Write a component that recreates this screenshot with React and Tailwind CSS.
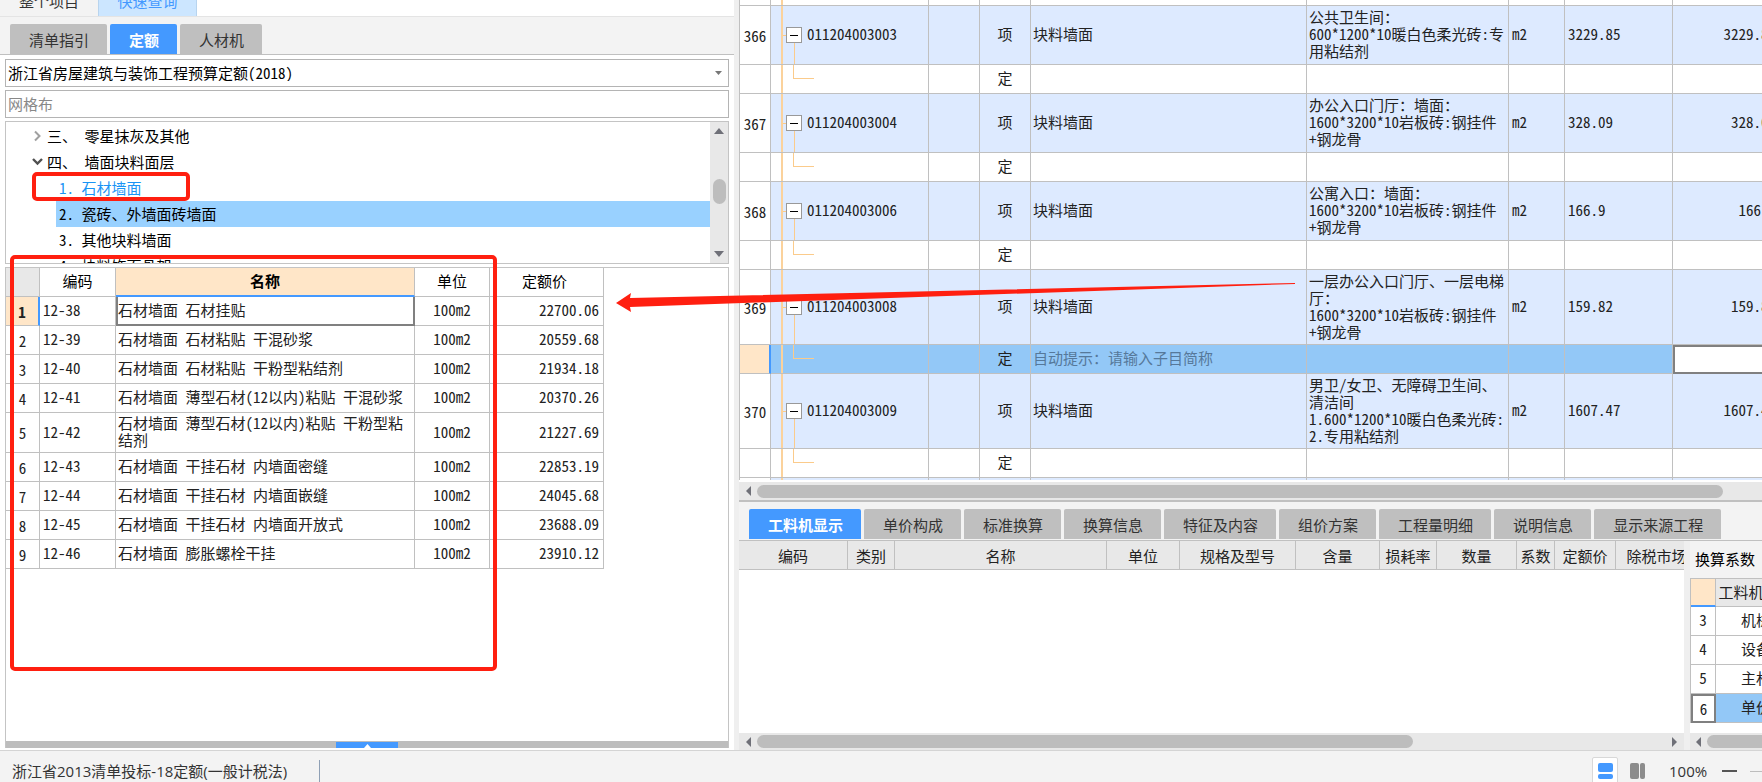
import React, { useState } from "react";

const quotaRows = [
  { code: "12-38", name: "石材墙面 石材挂贴", price: "22700.06" },
  { code: "12-39", name: "石材墙面 石材粘贴 干混砂浆", price: "20559.68" },
  { code: "12-40", name: "石材墙面 石材粘贴 干粉型粘结剂", price: "21934.18" },
  { code: "12-41", name: "石材墙面 薄型石材(12以内)粘贴 干混砂浆", price: "20370.26" },
  { code: "12-42", name: "石材墙面 薄型石材(12以内)粘贴 干粉型粘\n结剂", price: "21227.69", tall: true },
  { code: "12-43", name: "石材墙面 干挂石材 内墙面密缝", price: "22853.19" },
  { code: "12-44", name: "石材墙面 干挂石材 内墙面嵌缝", price: "24045.68" },
  { code: "12-45", name: "石材墙面 干挂石材 内墙面开放式", price: "23688.09" },
  { code: "12-46", name: "石材墙面 膨胀螺栓干挂", price: "23910.12" },
];

const billItems = [
  { no: 366, code: "011204003003", qty: "3229.85", height: "h-[58px]", desc: "公共卫生间：\n600*1200*10暖白色柔光砖:专\n用粘结剂" },
  { no: 367, code: "011204003004", qty: "328.09", height: "h-[58px]", desc: "办公入口门厅：墙面：\n1600*3200*10岩板砖:钢挂件\n+钢龙骨" },
  { no: 368, code: "011204003006", qty: "166.9", height: "h-[58px]", desc: "公寓入口：墙面：\n1600*3200*10岩板砖:钢挂件\n+钢龙骨" },
  { no: 369, code: "011204003008", qty: "159.82", height: "h-[74px]", active: true, desc: "一层办公入口门厅、一层电梯\n厅：\n1600*3200*10岩板砖:钢挂件\n+钢龙骨" },
  { no: 370, code: "011204003009", qty: "1607.47", height: "h-[74px]", desc: "男卫/女卫、无障碍卫生间、\n清洁间\n1.600*1200*10暖白色柔光砖:\n2.专用粘结剂" },
];

const detailTabs = ["工料机显示", "单价构成", "标准换算", "换算信息", "特征及内容", "组价方案", "工程量明细", "说明信息", "显示来源工程"];

const detailColumns = [
  { title: "编码", width: "w-[109px]" },
  { title: "类别", width: "w-[47px]" },
  { title: "名称", width: "w-[212px]" },
  { title: "单位", width: "w-[73px]" },
  { title: "规格及型号", width: "w-[116px]" },
  { title: "含量", width: "w-[84px]" },
  { title: "损耗率", width: "w-[57px]" },
  { title: "数量", width: "w-[80px]" },
  { title: "系数", width: "w-[38px]" },
  { title: "定额价", width: "w-[61px]" },
  { title: "除税市场价", width: "w-[97px]" },
];

const factors = [
  { no: 3, name: "机械" },
  { no: 4, name: "设备" },
  { no: 5, name: "主材" },
  { no: 6, name: "单价", active: true },
];

const frame = "border-r border-b border-[#c0c0c0] p-0";
const cell = `${frame} pb-[3px]`;

function Arrow({ dir }) {
  const points = {
    up: "0,8 10,8 5,2",
    down: "0,2 10,2 5,8",
    left: "8,0 8,10 3,5",
    right: "2,0 2,10 7,5",
  };
  return (
    <svg width="10" height="10" viewBox="0 0 10 10" className="shrink-0">
      <polygon points={points[dir]} fill="#6f7078" />
    </svg>
  );
}

function Tabs({ items, active, onSelect }) {
  return (
    <div className="flex items-end gap-[3px] bg-[#f3f3f3] pl-[10px] h-full">
      {items.map((item) => (
        <button
          key={item}
          onClick={() => onSelect(item)}
          className={
            item === active
              ? "h-[30px] shrink-0 rounded-t-[2px] bg-[#4499ff] pl-[19px] pr-[18px] font-bold text-white"
              : "h-[30px] shrink-0 rounded-t-[2px] bg-[#bfbfbf] pl-[19px] pr-[18px] text-[#333]"
          }
        >
          {item}
        </button>
      ))}
    </div>
  );
}

function QuotaTree() {
  return (
    <div className="flex h-[143px] shrink-0 overflow-hidden border border-[#c4c4c4] bg-white">
      <ul className="flex-1 pt-px leading-[26px] text-black">
        <li className="flex items-center pl-[26px]">
          <svg width="11" height="12" viewBox="0 0 11 12" fill="none" stroke="#a0a0a0" strokeWidth="2">
            <path d="M3 1.5L7.5 6L3 10.5" />
          </svg>
          <span className="ml-1">三、 零星抹灰及其他</span>
        </li>
        <li className="flex items-center pl-[26px]">
          <svg width="11" height="12" viewBox="0 0 11 12" fill="none" stroke="#505050" strokeWidth="2.4">
            <path d="M1 3L5.5 7.5L10 3" />
          </svg>
          <span className="ml-1">四、 墙面块料面层</span>
        </li>
        <li className="ml-[50px] pl-[3px] text-[#1a94f5]">1. 石材墙面</li>
        <li className="ml-[50px] bg-[#99d1ff] pl-[3px]">2. 瓷砖、外墙面砖墙面</li>
        <li className="ml-[50px] pl-[3px]">3. 其他块料墙面</li>
        <li className="ml-[50px] pl-[3px]">4. 块料饰面骨架</li>
      </ul>
      <div className="flex w-[18px] flex-col items-center bg-[#e8e8e8] py-1">
        <Arrow dir="up" />
        <div className="mt-[43px] h-[25px] w-[13px] rounded-full bg-[#bdbdbd]" />
        <div className="mt-auto">
          <Arrow dir="down" />
        </div>
      </div>
    </div>
  );
}

function QuotaTable() {
  return (
    <table className="w-[598px] table-fixed border-separate border-spacing-0 text-[#222]">
      <colgroup>
        <col className="w-[34px]" />
        <col className="w-[76px]" />
        <col className="w-[299px]" />
        <col className="w-[75px]" />
        <col className="w-[114px]" />
      </colgroup>
      <thead>
        <tr className="h-[29px] text-black">
          <th className={`${cell} bg-[#e8e8e8]`}></th>
          <th className={`${cell} font-normal`}>编码</th>
          <th className="border-r border-b-2 border-r-[#c0c0c0] border-b-[#4499ff] bg-[#ffe6c8] p-0 pb-[2px] font-bold">名称</th>
          <th className={`${cell} font-normal`}>单位</th>
          <th className={`${cell} pr-1 font-normal`}>定额价</th>
        </tr>
      </thead>
      <tbody>
        {quotaRows.map((row, i) => (
          <tr key={row.code} className={row.tall ? "h-[40px]" : "h-[29px]"}>
            <td
              className={
                i === 0
                  ? "border-r-2 border-b border-r-[#4499ff] border-b-[#c0c0c0] bg-[#ffe6c8] p-0 text-center font-bold"
                  : `${frame} text-center`
              }
            >
              {i + 1}
            </td>
            <td className={`${cell} pl-[3px]`}>{row.code}</td>
            <td
              className={
                i === 0
                  ? "border-r-2 border-b-2 border-l-2 border-[#808080] p-0 pb-[2px]"
                  : `${cell} pl-[2px] whitespace-pre`
              }
            >
              {row.name}
            </td>
            <td className={`${cell} text-center`}>100m2</td>
            <td className={`${cell} pr-1 text-right`}>{row.price}</td>
          </tr>
        ))}
      </tbody>
    </table>
  );
}

function BillRows({ item }) {
  const blue = `${cell} bg-[#ddeaff]`;
  const child = item.active ? `${cell} bg-[#93c8f7]` : cell;
  return (
    <>
      <tr>
        <td className={`${frame} text-center`}>{item.no}</td>
        <td className={`${frame} bg-[#ddeaff]`}>
          <div className={`flex items-center ${item.height}`}>
            <span className="h-full w-[12px] border-r-2 border-[#fbd29c]" />
            <span className="h-px w-[3px] bg-[#fbcb8b]" />
            <span className="flex h-full w-4 flex-col items-center">
              <span className="flex-1" />
              <button aria-label="折叠" className="flex size-4 items-center justify-center border border-[#999] bg-white">
                <span className="h-px w-2 bg-black" />
              </button>
              <span className="w-px flex-1 bg-[#fbcb8b]" />
            </span>
            <span className="ml-[5px] pb-[3px]">{item.code}</span>
          </div>
        </td>
        <td className={blue}></td>
        <td className={`${blue} text-center`}>项</td>
        <td className={`${blue} pl-[2px]`}>块料墙面</td>
        <td className={`${blue} pl-[2px] whitespace-pre`}>{item.desc}</td>
        <td className={`${blue} pl-[3px]`}>m2</td>
        <td className={`${blue} pl-[3px]`}>{item.qty}</td>
        <td className={`${blue} pr-[4px] text-right`}>{item.qty}</td>
      </tr>
      <tr>
        <td
          className={
            item.active
              ? "border-r-2 border-b border-r-[#4499ff] border-b-[#c0c0c0] bg-[#ffe6c8] p-0"
              : cell
          }
        ></td>
        <td className={item.active ? `${frame} bg-[#93c8f7]` : frame}>
          <div className="flex h-[28px]">
            <span className="w-[12px] border-r-2 border-[#fbd29c]" />
            <span className="ml-[10px] h-[14px] w-[21px] border-b border-l border-[#fbcb8b]" />
          </div>
        </td>
        <td className={child}></td>
        <td className={`${child} text-center`}>定</td>
        <td className={`${child} pl-[2px] text-[#56789a]`}>{item.active ? "自动提示：请输入子目简称" : ""}</td>
        <td className={child}></td>
        <td className={child}></td>
        <td className={child}></td>
        <td className={item.active ? "border-2 border-[#808080] bg-white p-0" : child}></td>
      </tr>
    </>
  );
}

function BillTable() {
  return (
    <table className="w-[1041px] table-fixed border-separate border-spacing-0 leading-[17px] text-[#222]">
      <colgroup>
        <col className="w-[31px]" />
        <col className="w-[158px]" />
        <col className="w-[51px]" />
        <col className="w-[51px]" />
        <col className="w-[276px]" />
        <col className="w-[202px]" />
        <col className="w-[56px]" />
        <col className="w-[108px]" />
        <col className="w-[108px]" />
      </colgroup>
      <tbody>
        <tr>
          <td className={frame}></td>
          <td className={frame}>
            <div className="h-[5px] w-[12px] border-r-2 border-[#fbd29c]" />
          </td>
          {[1, 2, 3, 4, 5, 6, 7].map((n) => (
            <td key={n} className={frame}></td>
          ))}
        </tr>
        {billItems.map((item) => (
          <BillRows key={item.no} item={item} />
        ))}
        <tr>
          <td className={frame}></td>
          <td className={`${frame} bg-[#ddeaff]`}>
            <div className="h-[28px] w-[12px] border-r-2 border-[#fbd29c]" />
          </td>
          {[1, 2, 3, 4, 5, 6, 7].map((n) => (
            <td key={n} className={`${frame} bg-[#ddeaff]`}></td>
          ))}
        </tr>
      </tbody>
    </table>
  );
}

function DetailPanel() {
  const [tab, setTab] = useState("工料机显示");
  return (
    <section className="flex h-[248px] shrink-0 flex-col">
      <div className="h-[39px] shrink-0 overflow-hidden border-b border-[#c0c0c0] bg-[#f3f3f3] pb-px font-['Noto_Sans_CJK_SC',sans-serif]">
        <Tabs items={detailTabs} active={tab} onSelect={setTab} />
      </div>
      <div className="flex min-h-0 flex-1">
        <div className="flex min-w-0 flex-1 flex-col overflow-hidden bg-white">
          <table className="w-[974px] table-fixed border-separate border-spacing-0 text-[#222]">
            <thead>
              <tr className="h-[29px]">
                {detailColumns.map((col) => (
                  <th key={col.title} className={`${frame} bg-[#e8e8e8] font-normal ${col.width}`}>
                    {col.title}
                  </th>
                ))}
              </tr>
            </thead>
          </table>
          <div className="mt-auto flex h-[17px] items-center bg-[#e8e8e8] pr-1 pl-[4px]">
            <Arrow dir="left" />
            <div className="ml-[4px] h-[13px] w-[70%] rounded-full bg-[#bdbdbd]" />
            <div className="ml-auto">
              <Arrow dir="right" />
            </div>
          </div>
        </div>
        <div className="w-[6px] shrink-0 bg-[#efefef]" />
        <div className="flex w-[72px] shrink-0 flex-col overflow-hidden bg-white">
          <h2 className="h-[37px] shrink-0 bg-[#f3f3f3] pl-[5px] leading-[36px] text-black">换算系数</h2>
          <table className="w-[107px] table-fixed border-separate border-spacing-0 border-t border-l border-[#c0c0c0] text-[#222]">
            <thead>
              <tr className="h-[28px]">
                <th className="w-[25px] border-r border-b-2 border-r-[#c0c0c0] border-b-[#4499ff] bg-[#ffe6c8] p-0"></th>
                <th className={`${cell} bg-[#e8e8e8] font-normal whitespace-nowrap`}>工料机类别</th>
              </tr>
            </thead>
            <tbody>
              {factors.map((f) => (
                <tr key={f.no} className="h-[29px]">
                  <td className={f.active ? "border-2 border-[#808080] p-0 text-center" : `${cell} text-center`}>{f.no}</td>
                  <td className={f.active ? `${cell} bg-[#93c8f7] text-center` : `${cell} text-center`}>{f.name}</td>
                </tr>
              ))}
            </tbody>
          </table>
          <div className="mt-auto flex h-[17px] items-center bg-[#e8e8e8] pl-[3px]">
            <Arrow dir="left" />
            <div className="ml-[4px] h-[13px] flex-1 rounded-l-full bg-[#bdbdbd]" />
          </div>
        </div>
      </div>
    </section>
  );
}

function StatusBar() {
  return (
    <footer className="flex h-8 shrink-0 items-center overflow-hidden border-t border-[#d4d4d4] bg-[#f3f3f3] pt-[9px] pl-3 font-['Open_Sans','Noto_Sans_CJK_SC',sans-serif] text-[#333]">
      <span>浙江省2013清单投标-18定额(一般计税法)</span>
      <span className="ml-8 h-[22px] w-px bg-[#8fa0b5]" />
      <button aria-label="上下布局" className="ml-auto flex h-[28px] w-[26px] items-center justify-center rounded-[2px] border border-[#d8d8d8] bg-white">
        <svg width="15" height="16" viewBox="0 0 15 16" fill="#4499ff">
          <rect width="15" height="9" rx="2" />
          <rect y="11" width="15" height="5" rx="2" />
        </svg>
      </button>
      <button aria-label="左右布局" className="ml-3">
        <svg width="15" height="16" viewBox="0 0 15 16" fill="#8c8c8c">
          <rect width="9" height="16" rx="2" />
          <rect x="10" width="5" height="16" rx="2" />
        </svg>
      </button>
      <span className="ml-6 w-[40px]">100%</span>
      <button aria-label="缩小" className="ml-[13px] h-[2px] w-[15px] bg-[#555]" />
      <span className="ml-[13px] flex w-3 overflow-hidden">
        <input
          type="range"
          aria-label="缩放比例"
          defaultValue="50"
          className="h-px w-[120px] shrink-0 appearance-none bg-[#bdbdbd]"
        />
      </span>
    </footer>
  );
}

// 红色批注：两个方框和一支箭头
function Annotations() {
  return (
    <div className="pointer-events-none absolute inset-0 overflow-hidden">
      <div className="absolute top-[172px] left-[32px] h-[29px] w-[158px] rounded-[5px] border-4 border-[#ff1f10]" />
      <div className="absolute top-[255px] left-[10px] h-[416px] w-[487px] rounded-[5px] border-4 border-[#ff1f10]" />
      <svg className="absolute top-[283px] left-[616px]" width="680" height="30" viewBox="0 0 680 30" fill="#ff1f10">
        <polygon points="0,20 15,10 14,15 679,0 679,1 14,24 15,29" />
      </svg>
    </div>
  );
}

export default function App() {
  const [tab, setTab] = useState("定额");
  return (
    <div className="relative flex h-screen flex-col overflow-hidden bg-white font-['Noto_Sans_Mono_CJK_SC','Noto_Sans_CJK_SC',sans-serif] text-[15px] leading-[17px]">
      <main className="flex min-h-0 flex-1">
        <aside className="flex w-[734px] shrink-0 flex-col">
          <div className="flex h-[17px] shrink-0 items-end overflow-hidden border-b border-[#e4e4e4] font-['Noto_Sans_CJK_SC',sans-serif]">
            <button className="h-8 w-[98px] shrink-0 bg-[#f3f3f3] text-[#333]">整个项目</button>
            <button className="h-8 w-[99px] shrink-0 border-x border-[#b8d4ee] bg-[#cce6ff] text-[#4499ff]">快速查询</button>
          </div>
          <div className="h-[38px] shrink-0 border-b border-[#c0c0c0] font-['Noto_Sans_CJK_SC',sans-serif]">
            <Tabs items={["清单指引", "定额", "人材机"]} active={tab} onSelect={setTab} />
          </div>
          <div className="flex min-h-0 flex-1 flex-col gap-[3px] pt-1 pr-[5px] pb-[2px] pl-[5px]">
            <div className="relative flex">
              <select aria-label="定额库" className="h-[28px] w-full appearance-none border border-[#b4b4b4] bg-white pb-[2px] pl-[2px] text-black">
                <option>浙江省房屋建筑与装饰工程预算定额(2018)</option>
              </select>
              <svg className="pointer-events-none absolute top-[12px] right-[7px]" width="7" height="4" viewBox="0 0 7 4">
                <polygon points="0,0 7,0 3.5,4" fill="#777" />
              </svg>
            </div>
            <input
              aria-label="搜索"
              placeholder="网格布"
              className="h-[28px] shrink-0 border border-[#b4b4b4] bg-white pb-[2px] pl-[2px] placeholder:text-[#888]"
            />
            <QuotaTree />
            <div className="flex min-h-0 flex-1 flex-col border border-b-0 border-[#c4c4c4]">
              <div className="min-h-0 flex-1 overflow-hidden">
                <QuotaTable />
              </div>
              <div className="flex h-[7px] items-end bg-[#bdbdbd]">
                <button aria-label="展开" className="ml-[330px] flex h-[6px] w-[62px] items-end justify-center bg-[#4499ff]">
                  <svg width="7" height="4" viewBox="0 0 7 4">
                    <polygon points="0,4 7,4 3.5,0" fill="#fff" />
                  </svg>
                </button>
              </div>
            </div>
          </div>
        </aside>
        <div className="w-[5px] shrink-0 bg-[#efefef]" />
        <div className="flex min-w-0 flex-1 flex-col">
          <section className="flex min-h-0 flex-1 flex-col border-b-2 border-[#c0c0c0]">
            <div className="min-h-0 flex-1 overflow-hidden border-l border-[#c0c0c0]">
              <BillTable />
            </div>
            <div className="mt-[2px] flex h-[18px] shrink-0 items-center bg-[#e8e8e8] pl-[4px]">
              <Arrow dir="left" />
              <div className="ml-[4px] h-[13px] w-[966px] rounded-full bg-[#bdbdbd]" />
            </div>
          </section>
          <DetailPanel />
        </div>
      </main>
      <StatusBar />
      <Annotations />
    </div>
  );
}
